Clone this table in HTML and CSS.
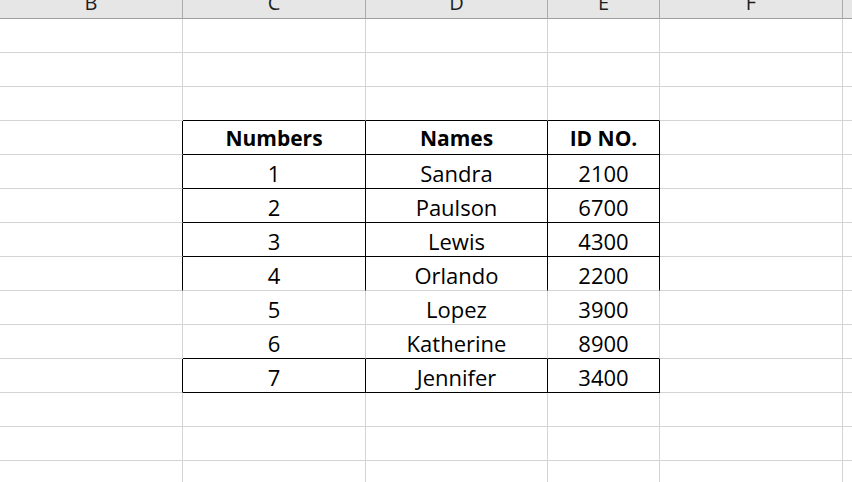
FILE: index.html
```html
<!DOCTYPE html>
<html>
<head>
<meta charset="utf-8">
<link rel="stylesheet" href="styles.css">
</head>
<body>
<div class="sheet">
  <div class="cell hd"><span>B</span></div><div class="cell hd"><span>C</span></div><div class="cell hd"><span>D</span></div><div class="cell hd"><span>E</span></div><div class="cell hd"><span>F</span></div><div class="cell hd last"></div>

  <div class="cell"></div><div class="cell"></div><div class="cell"></div><div class="cell"></div><div class="cell"></div><div class="cell last"></div>
  <div class="cell"></div><div class="cell"></div><div class="cell"></div><div class="cell"></div><div class="cell"></div><div class="cell last"></div>
  <div class="cell"></div><div class="cell kb"></div><div class="cell kb"></div><div class="cell kb"></div><div class="cell"></div><div class="cell last"></div>

  <div class="cell kr"></div><div class="cell kr kb th">Numbers</div><div class="cell kr kb th">Names</div><div class="cell kr kb th">ID NO.</div><div class="cell"></div><div class="cell last"></div>
  <div class="cell kr"></div><div class="cell kr kb td">1</div><div class="cell kr kb td">Sandra</div><div class="cell kr kb td">2100</div><div class="cell"></div><div class="cell last"></div>
  <div class="cell kr"></div><div class="cell kr kb td">2</div><div class="cell kr kb td">Paulson</div><div class="cell kr kb td">6700</div><div class="cell"></div><div class="cell last"></div>
  <div class="cell kr"></div><div class="cell kr kb td">3</div><div class="cell kr kb td">Lewis</div><div class="cell kr kb td">4300</div><div class="cell"></div><div class="cell last"></div>
  <div class="cell kr"></div><div class="cell kr td">4</div><div class="cell kr td">Orlando</div><div class="cell kr td">2200</div><div class="cell"></div><div class="cell last"></div>
  <div class="cell"></div><div class="cell td">5</div><div class="cell td">Lopez</div><div class="cell td">3900</div><div class="cell"></div><div class="cell last"></div>
  <div class="cell"></div><div class="cell kb td">6</div><div class="cell kb td">Katherine</div><div class="cell kb td">8900</div><div class="cell"></div><div class="cell last"></div>
  <div class="cell kr"></div><div class="cell kr kb td">7</div><div class="cell kr kb td">Jennifer</div><div class="cell kr kb td">3400</div><div class="cell"></div><div class="cell last"></div>

  <div class="cell"></div><div class="cell"></div><div class="cell"></div><div class="cell"></div><div class="cell"></div><div class="cell last"></div>
  <div class="cell"></div><div class="cell"></div><div class="cell"></div><div class="cell"></div><div class="cell"></div><div class="cell last"></div>
  <div class="cell"></div><div class="cell"></div><div class="cell"></div><div class="cell"></div><div class="cell"></div><div class="cell last"></div>
</div>
</body>
</html>
```
FILE: styles.css
```css
html, body {
  margin: 0;
  padding: 0;
  background: #ffffff;
}
body {
  width: 852px;
  height: 482px;
  overflow: hidden;
  font-family: "Open Sans", "DejaVu Sans", sans-serif;
  color: #000;
}
.sheet {
  display: grid;
  grid-template-columns: 183px 183px 182px 112px 183px 20px;
  grid-template-rows: 19px;
  grid-auto-rows: 34px;
}
.cell {
  box-sizing: border-box;
  border-right: 1px solid #d4d4d4;
  border-bottom: 1px solid #d4d4d4;
  text-align: center;
  white-space: nowrap;
  overflow: visible;
}
.hd {
  background: #e6e6e6;
  border-right-color: #ababab;
  border-bottom-color: #9e9e9e;
  overflow: hidden;
}
.hd span {
  display: block;
  font-size: 20px;
  line-height: 6px;
  color: #1e1e1e;
}
.kb {
  border-bottom-color: #000;
}
.kr {
  border-right-color: #000;
}
.th {
  font-weight: 700;
  font-size: 21px;
  line-height: 34px;
}
.td {
  font-size: 22px;
  line-height: 36px;
}
```
